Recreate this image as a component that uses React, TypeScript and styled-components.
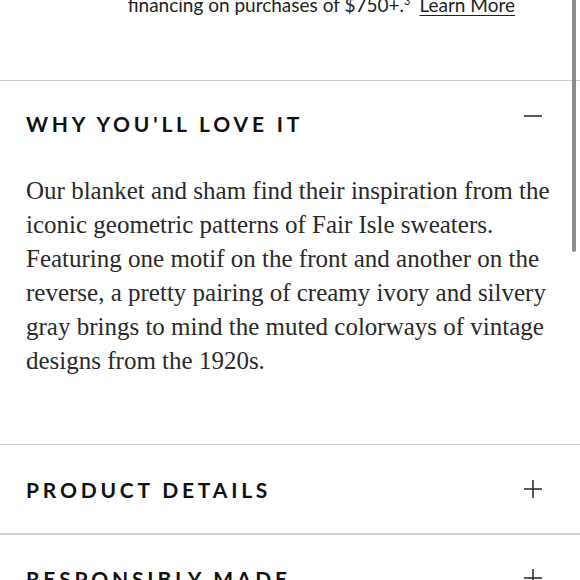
import React from "react";
import styled, { createGlobalStyle } from "styled-components";

const GlobalStyle = createGlobalStyle`
  html, body {
    margin: 0;
    padding: 0;
    background: #fff;
    overflow: hidden;
  }
`;

const Page = styled.div`
  position: relative;
  width: 580px;
  height: 580px;
  overflow: hidden;
  background: #fff;
`;

const TopNote = styled.div`
  height: 80px;
  display: flex;
  align-items: flex-start;
  justify-content: flex-end;
  padding-right: 65px;
  box-sizing: border-box;
  font-family: "Lato", "Liberation Sans", sans-serif;
  font-size: 19px;
  color: #222;
  line-height: 1;

  > span {
    margin-top: -5px;
  }
`;

const Sup = styled.sup`
  font-size: 11px;
  vertical-align: top;
  margin-right: 9px;
`;

const LearnMore = styled.a`
  color: #222;
  text-decoration: underline;
  text-underline-offset: 3px;
  text-decoration-thickness: 1px;
`;

const Section = styled.section<{ $thick?: boolean }>`
  border-top: ${(p) => (p.$thick ? "2px solid #d0d0d0" : "1px solid #cfcfcf")};
`;

const Header = styled.div<{ $h?: number }>`
  display: flex;
  align-items: center;
  justify-content: space-between;
  padding: 0 38px 0 26px;
  height: ${(p) => p.$h ?? 86}px;
`;

const Title = styled.h3`
  margin: 0;
  font-family: "Lato", "Liberation Sans", sans-serif;
  font-weight: 700;
  font-size: 21px;
  letter-spacing: 3.8px;
  color: #111;
`;

const Toggle = styled.svg`
  width: 18px;
  height: 18px;
  stroke: #333;
  stroke-width: 1.6;
`;

const Body = styled.p`
  margin: 0;
  padding: 9px 26px 0 26px;
  height: 270px;
  font-family: "Liberation Serif", serif;
  font-size: 25px;
  line-height: 34px;
  color: #2a2a2a;
`;

const ScrollThumb = styled.div`
  position: absolute;
  top: 0;
  right: 4px;
  width: 4px;
  height: 252px;
  background: #8c8c8c;
  border-radius: 0 0 2px 2px;
`;

const Minus = () => (
  <Toggle viewBox="0 0 18 18">
    <line x1="0" y1="2" x2="18" y2="2" />
  </Toggle>
);

const Plus = () => (
  <Toggle viewBox="0 0 18 18">
    <line x1="0" y1="9" x2="18" y2="9" />
    <line x1="9" y1="0" x2="9" y2="18" />
  </Toggle>
);

const App = () => {
  return (
    <Page>
      <GlobalStyle />
      <TopNote>
        <span>
          financing on purchases of $750+.<Sup>3</Sup>
          <LearnMore>Learn More</LearnMore>
        </span>
      </TopNote>

      <Section>
        <Header $h={84}>
          <Title>WHY YOU'LL LOVE IT</Title>
          <Minus />
        </Header>
        <Body>
          Our blanket and sham find their inspiration from the iconic geometric
          patterns of Fair Isle sweaters. Featuring one motif on the front and
          another on the reverse, a pretty pairing of creamy ivory and silvery
          gray brings to mind the muted colorways of vintage designs from the
          1920s.
        </Body>
      </Section>

      <Section>
        <Header $h={88}>
          <Title>PRODUCT DETAILS</Title>
          <Plus />
        </Header>
      </Section>

      <Section $thick>
        <Header>
          <Title>RESPONSIBLY MADE</Title>
          <Plus />
        </Header>
      </Section>

      <ScrollThumb />
    </Page>
  );
};

export default App;
